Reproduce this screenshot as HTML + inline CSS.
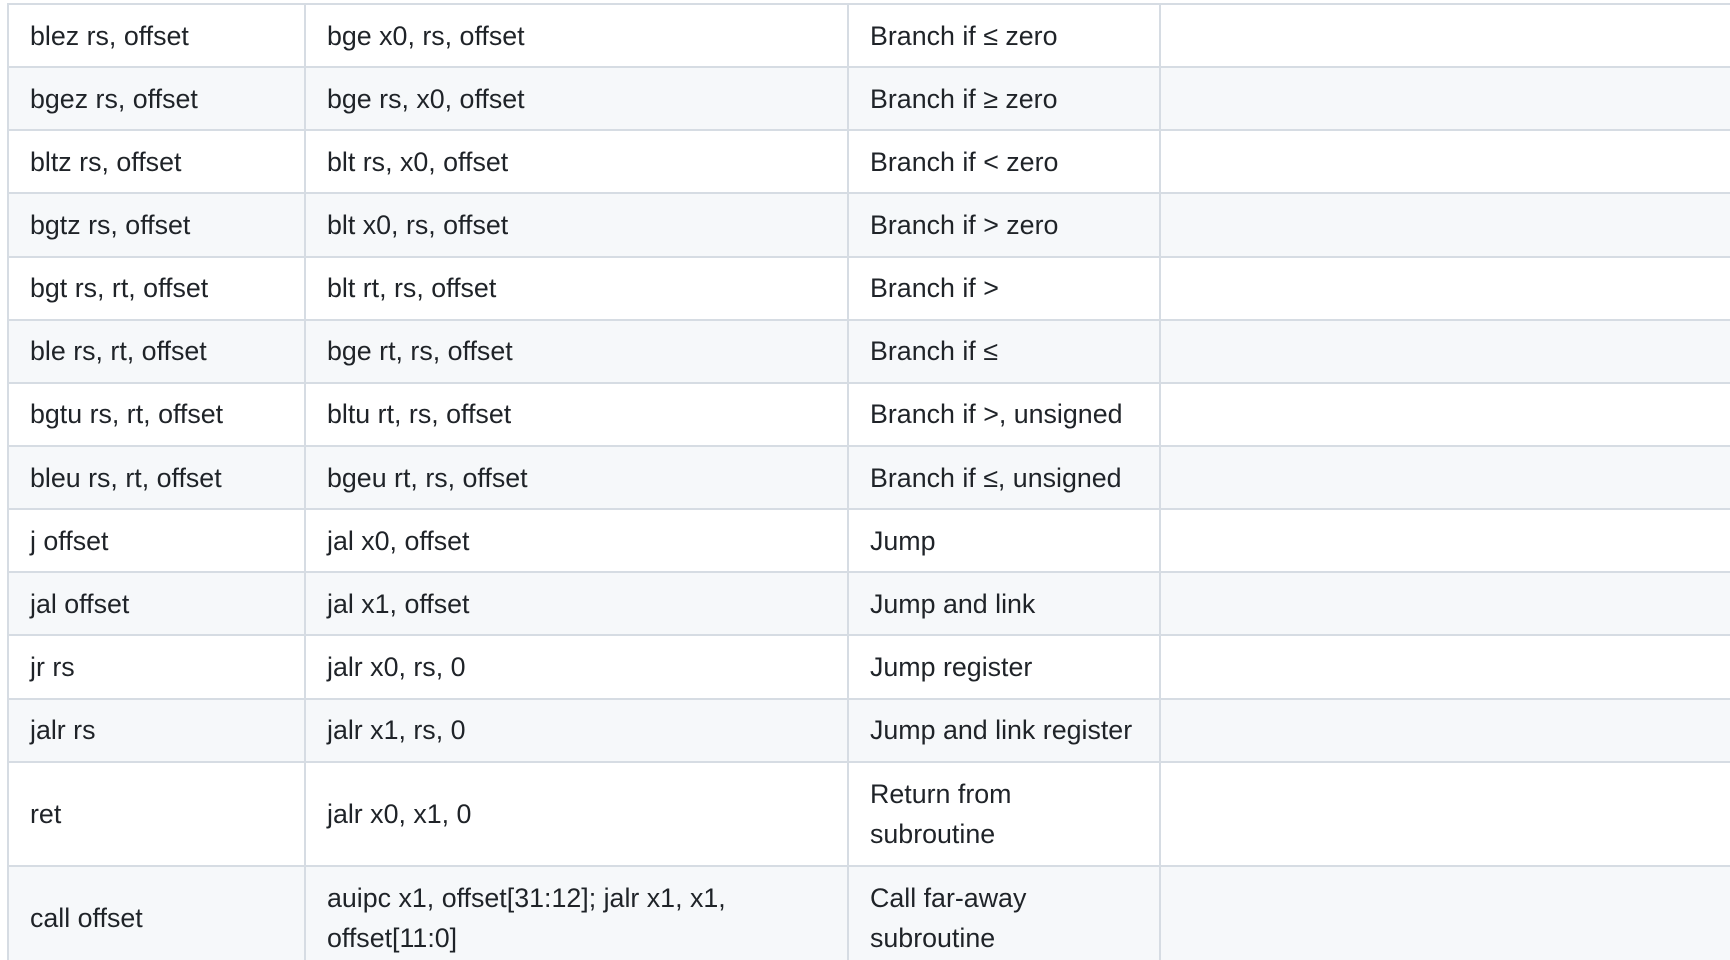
<!DOCTYPE html>
<html><head><meta charset="utf-8"><style>
html,body{margin:0;padding:0;background:#fff;width:1730px;height:960px;overflow:hidden}
#w{position:relative;width:1730px;height:960px;overflow:hidden}
table{position:absolute;left:7px;top:3px;border-collapse:collapse;width:1760px;table-layout:fixed;font-family:"Liberation Sans","DejaVu Sans",sans-serif;font-size:26.8px;color:#1f2328}
td{border:2px solid #d6dce3;padding:0 21px;line-height:40px;vertical-align:middle}
tr{height:63.15px}
tr.t{height:104px}
tr.l{height:124px}
tr.l td{padding-bottom:20px}
tr:nth-child(even) td{background:#f6f8fa}
</style></head><body><div id="w">
<table>
<colgroup><col style="width:297px"><col style="width:543px"><col style="width:312px"><col></colgroup>
<tr><td>blez rs, offset</td><td>bge x0, rs, offset</td><td>Branch if ≤ zero</td><td></td></tr>
<tr><td>bgez rs, offset</td><td>bge rs, x0, offset</td><td>Branch if ≥ zero</td><td></td></tr>
<tr><td>bltz rs, offset</td><td>blt rs, x0, offset</td><td>Branch if &lt; zero</td><td></td></tr>
<tr><td>bgtz rs, offset</td><td>blt x0, rs, offset</td><td>Branch if &gt; zero</td><td></td></tr>
<tr><td>bgt rs, rt, offset</td><td>blt rt, rs, offset</td><td>Branch if &gt;</td><td></td></tr>
<tr><td>ble rs, rt, offset</td><td>bge rt, rs, offset</td><td>Branch if ≤</td><td></td></tr>
<tr><td>bgtu rs, rt, offset</td><td>bltu rt, rs, offset</td><td>Branch if &gt;, unsigned</td><td></td></tr>
<tr><td>bleu rs, rt, offset</td><td>bgeu rt, rs, offset</td><td>Branch if ≤, unsigned</td><td></td></tr>
<tr><td>j offset</td><td>jal x0, offset</td><td>Jump</td><td></td></tr>
<tr><td>jal offset</td><td>jal x1, offset</td><td>Jump and link</td><td></td></tr>
<tr><td>jr rs</td><td>jalr x0, rs, 0</td><td>Jump register</td><td></td></tr>
<tr><td>jalr rs</td><td>jalr x1, rs, 0</td><td>Jump and link register</td><td></td></tr>
<tr class="t"><td>ret</td><td>jalr x0, x1, 0</td><td>Return from<br>subroutine</td><td></td></tr>
<tr class="l"><td>call offset</td><td>auipc x1, offset[31:12]; jalr x1, x1,<br>offset[11:0]</td><td>Call far-away<br>subroutine</td><td></td></tr>
</table>
</div></body></html>
